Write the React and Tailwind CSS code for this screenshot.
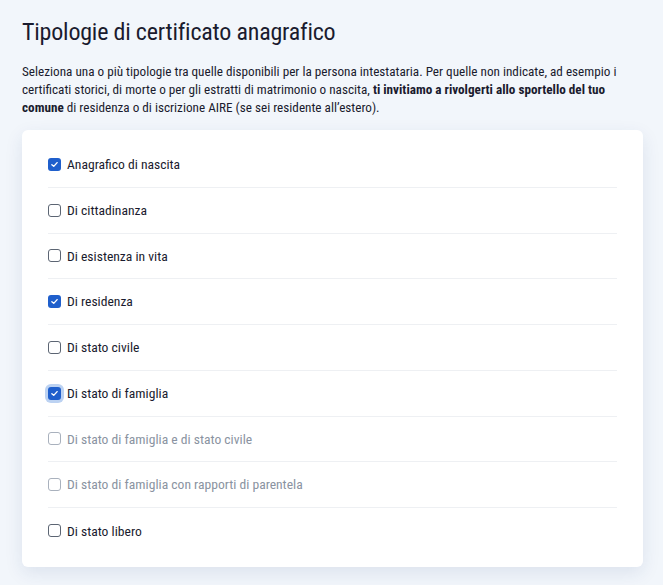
const items = [
  { label: 'Anagrafico di nascita', checked: true },
  { label: 'Di cittadinanza' },
  { label: 'Di esistenza in vita' },
  { label: 'Di residenza', checked: true },
  { label: 'Di stato civile' },
  { label: 'Di stato di famiglia', checked: true, focus: true },
  { label: 'Di stato di famiglia e di stato civile', disabled: true },
  { label: 'Di stato di famiglia con rapporti di parentela', disabled: true },
  { label: 'Di stato libero' },
];

function Box({ checked, disabled, focus }) {
  if (checked) {
    return (
      <span className={`flex h-[13px] w-[13px] shrink-0 items-center justify-center rounded-[3px] bg-[#1f5fcc] ${focus ? 'ring-[3px] ring-[#bcd2f2]' : ''}`}>
        <svg viewBox="0 0 12 12" className="h-[9px] w-[9px]">
          <path d="M2.5 6.2 L5 8.5 L9.5 3.5" fill="none" stroke="white" strokeWidth="1.8" strokeLinecap="round" strokeLinejoin="round" />
        </svg>
      </span>
    );
  }
  return (
    <span className={`h-[13px] w-[13px] shrink-0 rounded-[3px] border-[1.5px] bg-white ${disabled ? 'border-[#a9b1bd]' : 'border-[#5c6573]'}`} />
  );
}

export default function App() {
  return (
    <div className="min-h-[585px] bg-[#f2f6fb] pl-[22px] pr-[20px] pt-[18px] pb-[18px] text-[#1a1b2e]" style={{ fontFamily: '"Liberation Sans Narrow", "Roboto Condensed", "Titillium Web", Roboto, sans-serif' }}>
      <h1 className="text-[24px] leading-[28px] font-normal tracking-[-0.2px]">Tipologie di certificato anagrafico</h1>
      <p className="mt-[17px] whitespace-nowrap text-[13.2px] leading-[18px]">
        Seleziona una o più tipologie tra quelle disponibili per la persona intestataria. Per quelle non indicate, ad esempio i
        <br />
        certificati storici, di morte o per gli estratti di matrimonio o nascita, <b>ti invitiamo a rivolgerti allo sportello del tuo</b>
        <br />
        <b>comune</b> di residenza o di iscrizione AIRE (se sei residente all’estero).
      </p>
      <div className="mt-[13px] rounded-[6px] bg-white px-[26px] pt-[12px] pb-[13px] shadow-[0_6px_18px_rgba(30,60,120,0.10)]">
        {items.map((it, i) => (
          <div
            key={it.label}
            className={`flex h-[45.75px] items-center gap-[6px] ${i < items.length - 1 ? 'border-b border-[#eef0f3]' : ''}`}
          >
            <Box checked={it.checked} disabled={it.disabled} focus={it.focus} />
            <span className={`text-[13.6px] ${it.disabled ? 'text-[#8a93a1]' : 'text-[#1a1b2e]'}`}>{it.label}</span>
          </div>
        ))}
      </div>
    </div>
  );
}
